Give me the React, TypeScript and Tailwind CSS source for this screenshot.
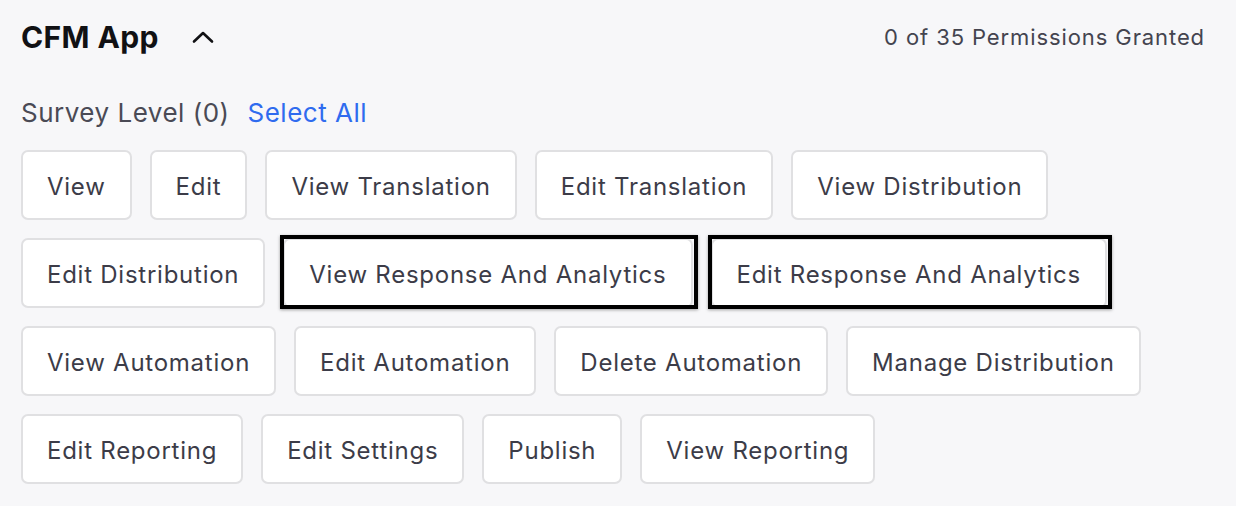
import React from 'react';

const rows: { label: string; marked?: boolean }[] = [
  { label: 'View' },
  { label: 'Edit' },
  { label: 'View Translation' },
  { label: 'Edit Translation' },
  { label: 'View Distribution' },
  { label: 'Edit Distribution' },
  { label: 'View Response And Analytics', marked: true },
  { label: 'Edit Response And Analytics', marked: true },
  { label: 'View Automation' },
  { label: 'Edit Automation' },
  { label: 'Delete Automation' },
  { label: 'Manage Distribution' },
  { label: 'Edit Reporting' },
  { label: 'Edit Settings' },
  { label: 'Publish' },
  { label: 'View Reporting' },
];

export default function App() {
  return (
    <div
      className="w-[1236px] h-[506px] bg-[#f7f7f9] pl-[21px] pr-[31px] overflow-hidden"
      style={{ fontFamily: 'Inter, "Noto Sans", sans-serif' }}
    >
      {/* Header */}
      <div className="flex items-center justify-between h-[74px]">
        <div className="flex items-center">
          <h2 className="text-[30px] font-bold text-[#111114] tracking-[0.4px]">CFM App</h2>
          <svg
            className="ml-[33px]"
            width="22"
            height="14"
            viewBox="0 0 22 14"
            fill="none"
            stroke="#111114"
            strokeWidth="2.6"
            strokeLinecap="round"
            strokeLinejoin="round"
          >
            <path d="M2 11.5 L11 3 L20 11.5" />
          </svg>
        </div>
        <span className="text-[22px] text-[#44444f] tracking-[0.9px]">0 of 35 Permissions Granted</span>
      </div>

      {/* Section title */}
      <div className="flex items-center gap-[18px] h-[76px]">
        <span className="text-[26px] text-[#4a4a55] tracking-[0.5px]">Survey Level (0)</span>
        <button className="text-[26px] text-[#2f6bef] tracking-[0.5px]">Select All</button>
      </div>

      {/* Permission chips */}
      <div className="flex flex-wrap gap-[18px]">
        {rows.map((r) => (
          <div key={r.label} className="relative">
            <button className="h-[70px] pt-[4px] px-[24px] bg-white border-2 border-[#e0e0e2] rounded-[7px] text-[24px] text-[#3c3c48] tracking-[0.75px] whitespace-nowrap">
              {r.label}
            </button>
            {r.marked && (
              <span className="pointer-events-none absolute -top-[3px] -bottom-[1px] -left-[3px] -right-[5px] border-[4px] border-black shadow-[0_1px_3px_rgba(0,0,0,0.35)]" />
            )}
          </div>
        ))}
      </div>
    </div>
  );
}
